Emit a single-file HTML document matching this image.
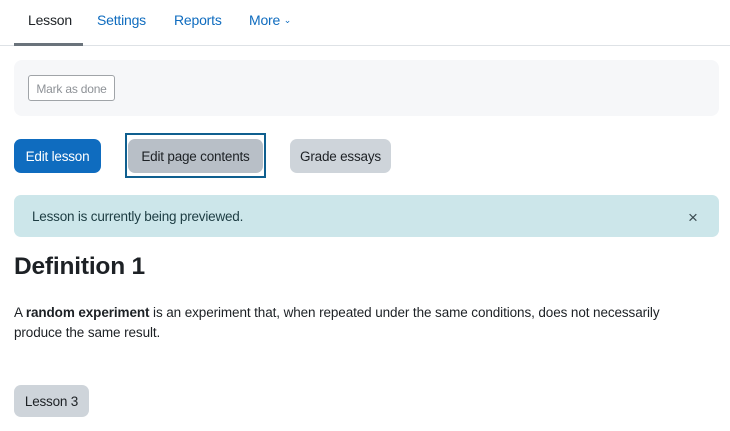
<!DOCTYPE html>
<html><head><style>
*{box-sizing:border-box;margin:0;padding:0}
body{width:730px;height:431px;background:#fff;font-family:"Liberation Sans",sans-serif;color:#1d2125;position:relative;overflow:hidden;font-size:13.5px}
.a{position:absolute}
.nav a{position:absolute;top:12px;font-size:14px;color:#0f6cbf;text-decoration:none;letter-spacing:-0.2px}
.btn{position:absolute;border-radius:7px;font-size:13.5px;display:flex;align-items:center;justify-content:center;letter-spacing:-0.2px;padding-top:1px}
</style></head><body>
<div class="nav">
<a style="left:28px;color:#1d2125">Lesson</a>
<a style="left:97px">Settings</a>
<a style="left:174px">Reports</a>
<a style="left:249px">More <span style="font-size:9px;vertical-align:2px">&#8964;</span></a>
</div>
<div class="a" style="left:0;top:45px;width:730px;height:1px;background:#dee2e6"></div>
<div class="a" style="left:14px;top:43px;width:69px;height:3px;background:#6a737b"></div>
<div class="a" style="left:14px;top:60px;width:705px;height:56px;background:#f6f7f9;border-radius:8px"></div>
<div class="btn" style="left:28px;top:75px;width:87px;height:26px;border:1px solid #a0a4a8;border-radius:3px;color:#8e9297;font-size:12px;background:#fff">Mark as done</div>
<div class="btn" style="left:14px;top:139px;width:87px;height:34px;background:#0f6cbf;color:#fff">Edit lesson</div>
<div class="a" style="left:125px;top:133px;width:141px;height:45px;border:2px solid #0f5f8f"></div>
<div class="btn" style="left:128px;top:139px;width:135px;height:34px;background:#b8bfc7;color:#1d2125">Edit page contents</div>
<div class="btn" style="left:290px;top:139px;width:101px;height:34px;background:#ced4da;color:#1d2125">Grade essays</div>
<div class="a" style="left:14px;top:195px;width:705px;height:42px;background:#cce6ea;border-radius:7px"></div>
<div class="a" style="left:32px;top:209px;font-size:13.5px;color:#1c3c42;letter-spacing:-0.2px">Lesson is currently being previewed.</div>
<div class="a" style="left:688px;top:208px;font-size:17px;color:#3a4a50">&#215;</div>
<div class="a" style="left:14px;top:253px;font-size:24.5px;font-weight:bold;color:#1d2125;letter-spacing:-0.2px">Definition 1</div>
<div class="a" style="left:14px;top:303px;width:680px;line-height:20px;font-size:13.5px;letter-spacing:-0.1px">A <b>random experiment</b> is an experiment that, when repeated under the same conditions, does not necessarily produce the same result.</div>
<div class="btn" style="left:14px;top:385px;width:75px;height:32px;background:#ced4da;color:#1d2125">Lesson 3</div>
</body></html>
